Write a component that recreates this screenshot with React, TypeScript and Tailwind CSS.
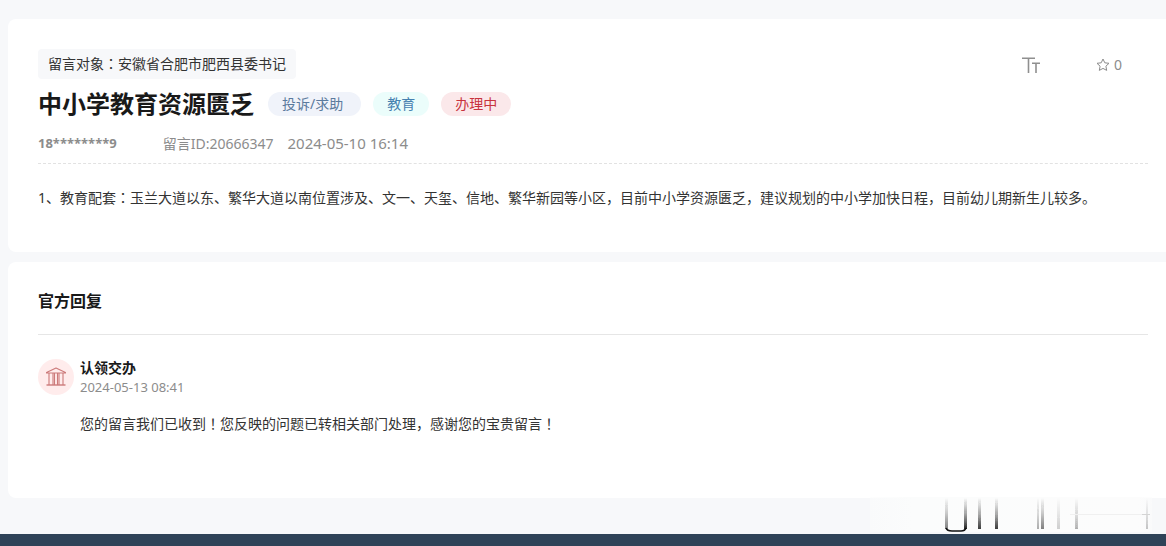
import React from 'react';

const TextSizeIcon: React.FC = () => (
  <svg width="18" height="16" viewBox="0 0 18 16" fill="none" stroke="#8f8f8f" strokeWidth="1.6">
    <path d="M0 1.2H13M6.5 1.2V16M10 6.2H18M14 6.2V16" />
  </svg>
);

const StarIcon: React.FC = () => (
  <svg width="14" height="14" viewBox="0 0 14 14" fill="none" stroke="#8c8c8c" strokeLinejoin="round">
    <path d="M7 1L8.8 4.8L13 5.3L9.9 8.2L10.7 12.4L7 10.4L3.3 12.4L4.1 8.2L1 5.3L5.2 4.8Z" />
  </svg>
);

const BuildingIcon: React.FC = () => (
  <svg width="20" height="20" viewBox="0 0 20 20" fill="none" stroke="#cc7a7a" strokeWidth="1.1">
    <path d="M0.5 6V5.5L10 1L19.5 5.5V6Z" strokeLinejoin="round" />
    <path d="M3 6V18M7 6V18M8.5 6V18M11.5 6V18M13 6V18M17 6V18" />
    <path d="M0.5 18H19.5" strokeWidth="1.4" />
  </svg>
);

// Full-width marks sit in the middle of their box here
const Punct: React.FC<{ children: string }> = ({ children }) => (
  <span className="leading-none font-['Noto_Sans_CJK_TC',sans-serif]" lang="zh-TW">{children}</span>
);

// Faded marks over the bottom right corner of the page
const Watermark: React.FC = () => (
  <svg
    className="absolute right-[14px] bottom-3 pointer-events-none"
    width="282"
    height="40"
    viewBox="0 0 282 40"
    aria-hidden="true"
  >
    <defs>
      <linearGradient id="fade" x1="0" y1="0" x2="0" y2="1">
        <stop offset="0" stopColor="#222" stopOpacity="0" />
        <stop offset="0.5" stopColor="#222" stopOpacity="0.4" />
        <stop offset="1" stopColor="#111" stopOpacity="0.9" />
      </linearGradient>
      <linearGradient id="paper" x1="0" y1="0" x2="1" y2="0">
        <stop offset="0" stopColor="#fbfcfc" stopOpacity="0.5" />
        <stop offset="0.15" stopColor="#fbfcfc" />
        <stop offset="0.95" stopColor="#fcfcfc" />
        <stop offset="1" stopColor="#fcfcfc" stopOpacity="0.5" />
      </linearGradient>
      <filter id="soft" x="-10%" width="120%">
        <feGaussianBlur stdDeviation="0.7 0" />
      </filter>
    </defs>
    <rect x="0" y="3" width="282" height="35" fill="url(#paper)" />
    <g fill="url(#fade)" filter="url(#soft)">
      <rect x="75" y="4" width="3" height="31" opacity="0.6" />
      <rect x="94" y="4" width="3" height="31" />
      <rect x="108" y="4" width="3" height="31" opacity="0.9" />
      <rect x="125" y="4" width="3" height="31" opacity="0.9" />
      <rect x="167" y="4" width="2" height="31" opacity="0.4" />
      <rect x="171" y="4" width="3" height="31" opacity="0.6" />
      <rect x="187" y="4" width="3" height="31" opacity="0.2" />
      <rect x="205" y="4" width="3" height="31" opacity="0.35" />
      <rect x="276" y="4" width="2" height="31" opacity="0.25" />
    </g>
    <path d="M76 34Q77 37 82 37H91Q95 37 96 34" fill="none" stroke="#111" strokeWidth="1.5" />
    <path d="M200 20.5H280" stroke="#f0f0f0" />
    <path d="M272 20.5H280" stroke="#d4d4d4" />
  </svg>
);

const App: React.FC = () => {
  return (
    <div className="relative bg-[#f7f8fa] pt-[19px] pl-2 text-sm text-[#333] font-['Noto_Sans','Noto_Sans_CJK_SC',sans-serif]">
      <section className="bg-white rounded-l-lg pt-[30px] pb-10 pl-[30px] pr-[18px]">
        <div className="flex justify-between items-start">
          <div className="bg-[#f7f8fa] rounded-sm px-[10px] leading-[30px]">
            留言对象<Punct>：</Punct>安徽省合肥市肥西县委书记
          </div>
          <div className="flex items-center gap-14 pr-[26px] h-8">
            <button type="button" aria-label="字号">
              <TextSizeIcon />
            </button>
            <button type="button" className="flex items-center gap-1 text-[#8c8c8c]">
              <StarIcon />
              <span>0</span>
            </button>
          </div>
        </div>

        <div className="flex items-center gap-3 mt-[3px] h-10">
          <h1 className="text-2xl font-bold text-[#191919] mr-[2px]">中小学教育资源匮乏</h1>
          <span className="rounded-full bg-[#f0f3fa] text-[#5b7a9d] leading-6 pl-[14px] pr-[18px]">投诉/求助</span>
          <span className="rounded-full bg-[#ebfdfb] text-[#4580b0] leading-6 px-[14px]">教育</span>
          <span className="rounded-full bg-[#fbe8ea] text-[#c8333d] leading-6 px-[14px]">办理中</span>
        </div>

        <div className="flex items-center h-10 border-b border-dashed border-[#e2e2e2] text-[#8c8c8c]">
          <span className="text-[13px] font-bold mr-[46px]">18********9</span>
          <span className="mr-[14px]">留言ID:20666347</span>
          <span className="text-[15px]">2024-05-10 16:14</span>
        </div>

        <p className="mt-5 leading-7">
          1、教育配套<Punct>：</Punct>玉兰大道以东、繁华大道以南位置涉及、文一、天玺、信地、繁华新园等小区，目前中小学资源匮乏，建议规划的中小学加快日程，目前幼儿期新生儿较多。
        </p>
      </section>

      <section className="bg-white rounded-l-lg mt-[10px] pt-[19px] pb-[60px] pl-[30px] pr-[18px]">
        <h2 className="text-base font-bold text-[#191919] leading-10 pb-[13px] border-b border-[#e6e6e6]">官方回复</h2>
        <div className="flex gap-[6px] mt-6">
          <div className="w-9 h-9 shrink-0 rounded-full bg-[#ffecec] flex items-center justify-center">
            <BuildingIcon />
          </div>
          <div>
            <h3 className="font-bold text-[#191919] leading-[18px]">认领交办</h3>
            <time className="block text-[13px] leading-5 text-[#8c8c8c]">2024-05-13 08:41</time>
            <p className="mt-[13px] leading-7">
              您的留言我们已收到<Punct>！</Punct>您反映的问题已转相关部门处理，感谢您的宝贵留言<Punct>！</Punct>
            </p>
          </div>
        </div>
      </section>

      <footer className="mt-9 -ml-2 h-3 bg-[#2f4358]" />
      <Watermark />
    </div>
  );
};

export default App;
